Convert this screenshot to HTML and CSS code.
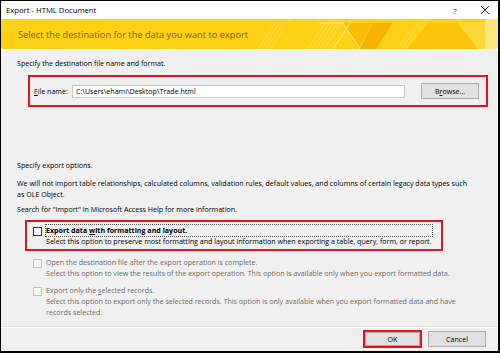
FILE: index.html
```html
<!DOCTYPE html>
<html>
<head>
<meta charset="utf-8">
<link rel="stylesheet" href="styles.css">
</head>
<body>
<div class="window">
  <div class="titlebar">
    <span class="title">Export - HTML Document</span>
    <span class="tb-btn help">?</span>
    <span class="tb-btn close">
      <svg width="10" height="10" viewBox="0 0 10 10"><path d="M1 1L9 9M9 1L1 9" stroke="#333" stroke-width="1"/></svg>
    </span>
  </div>
  <div class="banner">
    <span class="banner-text">Select the destination for the data you want to export</span>
    <svg class="banner-art" width="250" height="30" viewBox="0 0 250 30">
      <g stroke="#ffe680" stroke-width="0.6" opacity="0.8">
        <path d="M10 30L30 0M14 30L34 0M18 30L38 0M22 30L42 0"/>
        <path d="M60 30L80 0M64 30L84 0M68 30L88 0M72 30L92 0M76 30L96 0"/>
        <path d="M150 30L170 0M154 30L174 0M158 30L178 0M162 30L182 0"/>
      </g>
      <polygon points="95,4 125,4 110,30" fill="#f7b500" opacity="0.7"/>
      <polygon points="125,4 145,4 128,30 112,30" fill="#f5a800" opacity="0.8"/>
      <polyline points="70,4 95,4 112,30" fill="none" stroke="#fff2b0" stroke-width="0.8"/>
      <polyline points="85,30 102,4" fill="none" stroke="#fff2b0" stroke-width="0.8"/>
      <polygon points="180,4 210,4 230,30 160,30" fill="#f9c20a" opacity="0.9"/>
      <polygon points="210,4 237,4 237,30 230,30" fill="#fbd93c"/>
      <rect x="237" y="0" width="13" height="30" fill="#fde67a"/>
    </svg>
  </div>
  <div class="strip"></div>
  <div class="content">
    <p class="line l1">Specify the destination file name and format.</p>
    <div class="redbox filebox">
      <span class="label"><u>F</u>ile name:</span>
      <div class="input">C:\Users\ehami\Desktop\Trade.html</div>
      <div class="btn browse">B<u>r</u>owse...</div>
    </div>
    <p class="line l2">Specify export options.</p>
    <p class="para l3">We will not import table relationships, calculated columns, validation rules, default values, and columns of certain legacy data types such<br>as OLE Object.</p>
    <p class="line l4">Search for "Import" in Microsoft Access Help for more information.</p>
    <div class="redbox optbox">
      <div class="opt">
        <span class="cb"></span>
        <div class="opt-text">
          <div class="opt-title bold focus">Export data <u>w</u>ith formatting and layout.</div>
          <div class="opt-desc">Select this option to preserve most formatting and layout information when exporting a table, query, form, or report.</div>
        </div>
      </div>
    </div>
    <div class="opt disabled o2">
      <span class="cb"></span>
      <div class="opt-text">
        <div class="opt-title">Open the destination file after the export operation is complete.</div>
        <div class="opt-desc">Select this option to view the results of the export operation. This option is available only when you export formatted data.</div>
      </div>
    </div>
    <div class="opt disabled o3">
      <span class="cb"></span>
      <div class="opt-text">
        <div class="opt-title">Export only the <u>s</u>elected records.</div>
        <div class="opt-desc">Select this option to export only the selected records. This option is only available when you export formatted data and have<br>records selected.</div>
      </div>
    </div>
  </div>
  <div class="footer">
    <div class="okwrap"><div class="btn ok">OK</div></div>
    <div class="btn cancel">Cancel</div>
  </div>
</div>
</body>
</html>
```

FILE: styles.css
```css
html, body {
  margin: 0;
  padding: 0;
  background: #000;
}
.window {
  width: 497px;
  height: 350px;
  border-top: 1px solid #000;
  border-left: 1px solid #000;
  border-right: 2px solid #000;
  border-bottom: 2px solid #000;
  background: #f0f0f0;
  font-family: "Open Sans", "Noto Sans", sans-serif;
  font-size: 7.1px;
  color: #000;
  display: flex;
  flex-direction: column;
  overflow: hidden;
}
.titlebar {
  height: 18px;
  background: #fff;
  display: flex;
  align-items: center;
  padding-left: 5px;
}
.title {
  font-size: 7.7px;
  flex: 1;
}
.tb-btn {
  width: 30px;
  text-align: center;
  display: flex;
  justify-content: center;
  color: #333;
}
.help { font-size: 8px; margin-left: 2px; }
.close { margin-right: -2px; }
.banner {
  height: 30px;
  background: #fcd116;
  position: relative;
  display: flex;
  align-items: center;
  padding-left: 17px;
}
.banner-text {
  font-size: 9.25px;
  color: #8a5800;
  position: relative;
  z-index: 1;
}
.banner-art {
  position: absolute;
  right: 0;
  top: 0;
}
.strip {
  height: 2px;
  background: #f7f7f7;
}
.content {
  flex: 1;
  padding-left: 16px;
  display: flex;
  flex-direction: column;
  align-items: flex-start;
}
p { margin: 0; }
.line, .para {
  line-height: 11px;
  white-space: nowrap;
}
.l1 { margin-top: 7px; }
.redbox {
  border: 2px solid #e3131b;
  box-sizing: border-box;
}
.filebox {
  margin-top: 6px;
  margin-left: 11px;
  width: 460px;
  height: 32px;
  display: flex;
  align-items: center;
  padding-left: 4px;
}
.label { width: 38px; }
.input {
  width: 333px;
  height: 13px;
  box-sizing: border-box;
  background: #fff;
  border: 1px solid #c8c8c8;
  line-height: 11px;
  padding-left: 3px;
}
.btn {
  box-sizing: border-box;
  background: #e1e1e1;
  border: 1px solid #adadad;
  text-align: center;
}
.browse {
  margin-left: 16px;
  width: 58px;
  height: 16px;
  line-height: 14px;
}
.l2 { margin-top: 53px; }
.l3 { margin-top: 7px; }
.l4 { margin-top: 4px; }
.optbox {
  margin-top: 5px;
  margin-left: 8px;
  width: 418px;
  height: 31px;
  padding: 3px 0 0 6px;
}
.opt {
  display: flex;
  align-items: flex-start;
}
.cb {
  width: 9px;
  height: 9px;
  box-sizing: border-box;
  border: 1px solid #333;
  background: #fff;
  margin-top: 2px;
  margin-right: 4px;
  flex: none;
}
.opt-text { line-height: 11px; white-space: nowrap; }
.opt-desc { line-height: 11px; }
.bold { font-weight: bold; }
.focus { outline: 1px dotted #555; outline-offset: 0; }
.disabled { color: #6d6d6d; }
.disabled .cb { border-color: #c4c4c4; background: #f7f7f7; }
.o2 { margin-top: 6px; margin-left: 16px; }
.o3 { margin-top: 6px; margin-left: 16px; }
.footer {
  height: 24px;
  border-top: 1px solid #dcdcdc;
  box-shadow: inset 0 1px 0 #fff;
  display: flex;
  align-items: center;
  justify-content: flex-end;
  padding-right: 12px;
}
.okwrap {
  border: 2px solid #e3131b;
  margin-right: 6px;
}
.ok {
  width: 55px;
  height: 14px;
  line-height: 12px;
}
.cancel {
  width: 58px;
  height: 16px;
  line-height: 14px;
}
```
